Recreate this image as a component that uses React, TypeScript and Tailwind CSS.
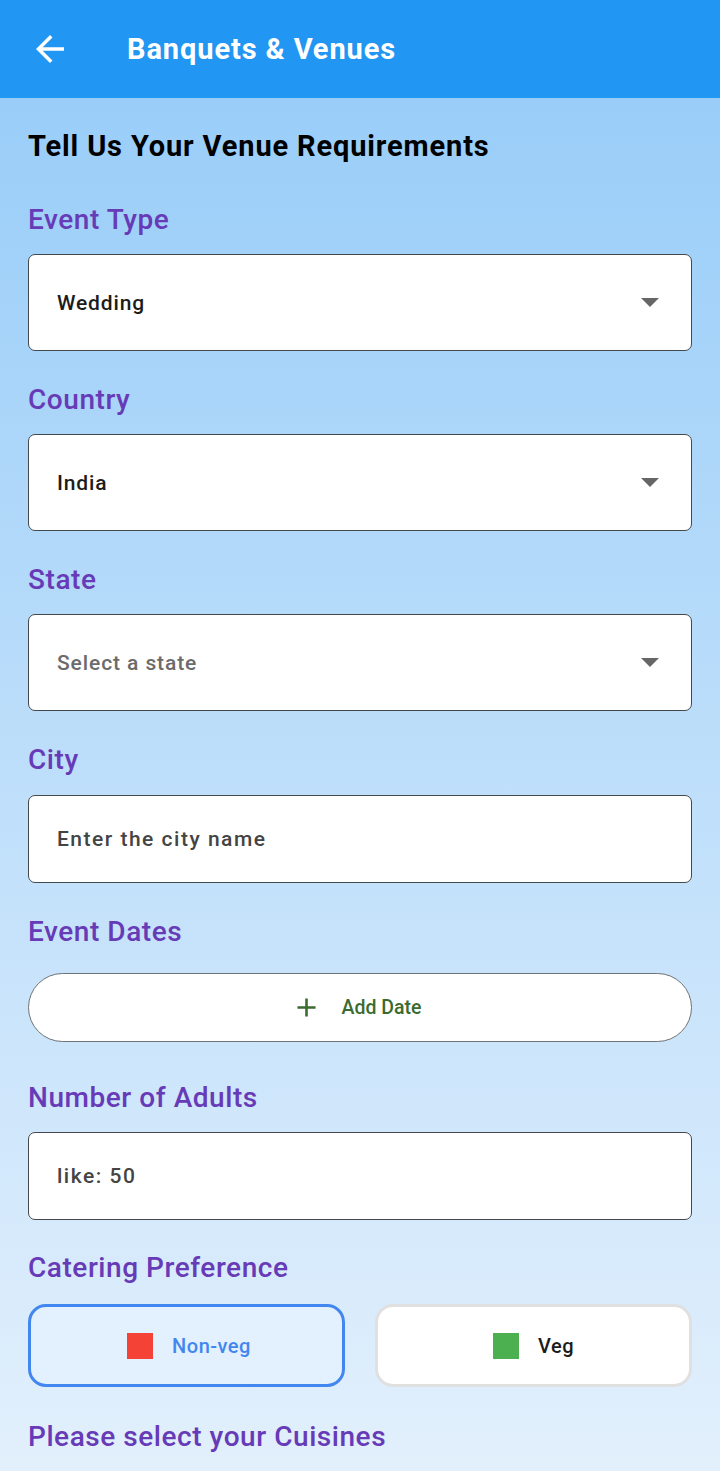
function Label({ children }: { children: React.ReactNode }) {
    return (
        <div className="h-[34px] flex items-center text-[28px] font-medium text-[#673AB7] tracking-[0.55px]">
            {children}
        </div>
    )
}

function SelectBox({ value, placeholder }: { value?: string; placeholder?: string }) {
    return (
        <div className="h-[97px] bg-white border-[1.5px] border-[#45494c] rounded-[7px] flex items-center justify-between pl-[28px] pr-[31px] pt-[3px]">
            {value ? (
                <span className="text-[21px] font-medium text-[#1c1c1c] tracking-[0.85px]">{value}</span>
            ) : (
                <span className="text-[21px] font-medium text-[#6b6b6b] tracking-[0.9px]">{placeholder}</span>
            )}
            <svg width="20" height="10" viewBox="0 0 20 10" className="-mt-[3px]">
                <path d="M1 0 L19 0 L10 9 Z" fill="#666" />
            </svg>
        </div>
    )
}

function TextBox({ placeholder }: { placeholder: string }) {
    return (
        <div className="h-[88px] bg-white border-[1.5px] border-[#45494c] rounded-[7px] flex items-center pl-[28px] pt-[2px]">
            <span className="text-[21px] font-medium text-[#444] tracking-[1.5px]">{placeholder}</span>
        </div>
    )
}

export default function App() {
    return (
        <div className="w-[720px] min-h-[1471px] font-['Roboto',sans-serif] bg-gradient-to-b from-[#94CBF8] to-[#E3F0FC]">
            <header className="h-[98px] bg-[#2196F3] flex items-center">
                <svg className="ml-[29px]" width="42" height="42" viewBox="0 0 24 24" fill="white">
                    <path d="M20 11H7.83l5.59-5.59L12 4l-8 8 8 8 1.41-1.41L7.83 13H20v-2z" />
                </svg>
                <h1 className="ml-[56px] pt-[2px] text-[29px] font-bold text-white tracking-[0.9px]">Banquets &amp; Venues</h1>
            </header>

            <main className="px-[28px] pt-[32px] pb-[30px] flex flex-col">
                <div className="h-[34px] flex items-center text-[29px] font-bold text-black tracking-[0.85px]">
                    Tell Us Your Venue Requirements
                </div>

                <div className="mt-[39px]">
                    <Label>Event Type</Label>
                </div>
                <div className="mt-[17px]">
                    <SelectBox value="Wedding" />
                </div>

                <div className="mt-[32px]">
                    <Label>Country</Label>
                </div>
                <div className="mt-[17px]">
                    <SelectBox value="India" />
                </div>

                <div className="mt-[32px]">
                    <Label>State</Label>
                </div>
                <div className="mt-[17px]">
                    <SelectBox placeholder="Select a state" />
                </div>

                <div className="mt-[32px]">
                    <Label>City</Label>
                </div>
                <div className="mt-[18px]">
                    <TextBox placeholder="Enter the city name" />
                </div>

                <div className="mt-[32px]">
                    <Label>Event Dates</Label>
                </div>
                <button className="mt-[24px] h-[69px] bg-white border-[1.5px] border-[#6f7275] rounded-full flex items-center justify-center gap-[20px] text-[#3b6b2e]">
                    <svg width="31" height="31" viewBox="0 0 24 24" fill="currentColor" className="-ml-[8px]">
                        <path d="M19 13h-6v6h-2v-6H5v-2h6V5h2v6h6v2z" />
                    </svg>
                    <span className="text-[19.5px] font-medium">Add Date</span>
                </button>

                <div className="mt-[39px]">
                    <Label>Number of Adults</Label>
                </div>
                <div className="mt-[17px]">
                    <TextBox placeholder="like: 50" />
                </div>

                <div className="mt-[31px]">
                    <Label>Catering Preference</Label>
                </div>
                <div className="mt-[19px] grid grid-cols-2 gap-[30px]">
                    <button className="h-[83px] rounded-[18px] border-[3px] border-[#4287F0] bg-[#E3F0FD] flex items-center justify-center gap-[19px]">
                        <span className="ml-[5px] w-[26px] h-[26px] bg-[#F44336]" />
                        <span className="text-[20px] font-medium text-[#4287F0] tracking-[0.5px]">Non-veg</span>
                    </button>
                    <button className="h-[83px] rounded-[18px] border-[3px] border-[#e0e0e0] bg-white flex items-center justify-center gap-[19px]">
                        <span className="w-[26px] h-[26px] bg-[#4CAF50]" />
                        <span className="text-[20px] font-medium text-[#1c1c1c] tracking-[0.5px]">Veg</span>
                    </button>
                </div>

                <div className="mt-[33px]">
                    <Label>Please select your Cuisines</Label>
                </div>
            </main>
        </div>
    )
}
